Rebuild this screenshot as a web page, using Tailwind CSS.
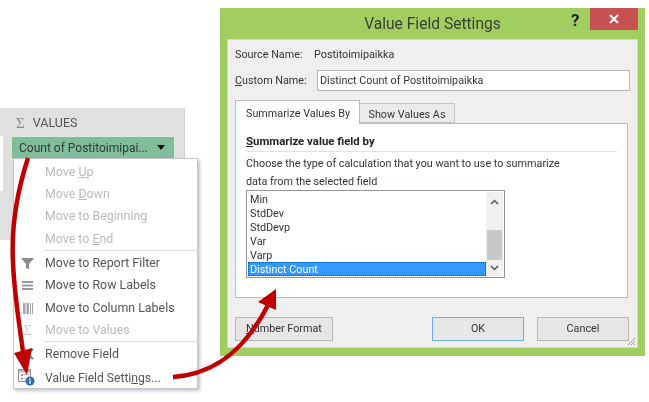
<!DOCTYPE html>
<html lang="en">
<head>
<meta charset="UTF-8">
<title>Value Field Settings</title>
<script src="https://cdn.jsdelivr.net/npm/@tailwindcss/browser@4"></script>
</head>
<body class="bg-white">
<div class="relative w-[649px] h-[402px] overflow-hidden bg-white blur-[0.3px] font-['Roboto','Noto_Sans',sans-serif] text-[12px] text-[#333]">

  <!-- pivot field pane -->
  <div class="absolute left-0 top-[108px] w-[185px] h-[132px] bg-[#e0e0e0] border-r border-[#d0d0d0]">
    <div class="flex items-center gap-[8px] pl-[16px] pt-[3px] h-[28px] text-[12.500px] text-[#555]">
      <span class="font-['Liberation_Serif',serif] text-[15px] text-[#888]">Σ</span>
      <span>VALUES</span>
    </div>
    <div class="absolute left-0 top-[28px] w-[3px] h-[55px] bg-white"></div>
    <div class="ml-[12px] w-[162px] h-[22px] flex items-center justify-between pl-[7px] pr-[9px] bg-[#82bd9b] border-t border-white/70 text-[12px] whitespace-nowrap text-[#2f3b35]">
      <span>Count of Postitoimipai...</span>
      <span class="w-0 h-0 border-x-[4px] border-x-transparent border-t-[5px] border-t-[#111]"></span>
    </div>
  </div>

  <!-- context menu -->
  <div class="absolute left-[13px] top-[158px] w-[185px] h-[231px] bg-white border border-[#c6c6c6] shadow-[2px_2px_3px_rgba(120,120,150,0.45)] text-[12.400px] text-[#555]">
    <div class="pl-[31px] pt-[2px] text-[#bbb]">
      <div class="h-[22.2px] leading-[22px]">Move <u>U</u>p</div>
      <div class="h-[22.2px] leading-[22px]">Move <u>D</u>own</div>
      <div class="h-[22.2px] leading-[22px]">Move to Be<u>g</u>inning</div>
      <div class="h-[22.2px] leading-[22px]">Move to <u>E</u>nd</div>
    </div>
    <div class="ml-[31px] border-t border-[#ddd]"></div>
    <div class="pt-[2px]">
      <div class="flex items-center h-[22px]">
        <span class="w-[31px] flex justify-center pr-[4px]">
          <svg width="13" height="13" viewBox="0 0 13 13"><path d="M0 1h13L8 7v5L5 11V7z" fill="#8b8b8b"/></svg>
        </span>Move to Report Filter
      </div>
      <div class="flex items-center h-[22px]">
        <span class="w-[31px] flex justify-center pr-[4px]">
          <svg width="11" height="9" viewBox="0 0 11 9"><path d="M0 0h11v2H0zM0 3.500h11v2H0zM0 7h11v2H0z" fill="#999"/></svg>
        </span>Move to Row Labels
      </div>
      <div class="flex items-center h-[22.6px]">
        <span class="w-[31px] flex justify-center pr-[4px]">
          <svg width="10" height="11" viewBox="0 0 10 11"><path d="M0 0h2.500v11H0zM3.500 0H6v11H3.500zM7 0h1v11H7zM9 0h1v11H9z" fill="#a5a5a5"/></svg>
        </span>Move to Column Labels
      </div>
      <div class="flex items-center h-[22px] text-[#bbb]">
        <span class="w-[31px] flex justify-center pr-[4px] font-['Liberation_Serif',serif] text-[14px] text-[#ccc]">Σ</span>Move to Values
      </div>
    </div>
    <div class="ml-[31px] border-t border-[#ddd]"></div>
    <div class="flex items-center h-[24px]">
      <span class="w-[31px] flex justify-center pr-[4px]">
        <svg width="13" height="12" viewBox="0 0 13 12"><path d="M1 1l11 10M12 1L1 11" stroke="#777" stroke-width="2"/></svg>
      </span>Remove Field
    </div>
    <div class="flex items-center h-[23px] text-[12.100px]">
      <span class="w-[31px] pl-[4px]">
        <svg width="17" height="17" viewBox="0 0 17 17">
          <path d="M.5 .5h12v12H.5z" fill="#fff" stroke="#888"/>
          <path d="M1 1h11v2.500H1z" fill="#bbb"/>
          <path d="M3 5h2v2H3zM3 8.500h2v2H3z" fill="#999"/>
          <path d="M6 5.500h5M6 9h2" stroke="#bbb"/>
          <circle cx="12" cy="12" r="4.500" fill="#2a6fb0"/>
          <path d="M11.300 9.500h1.400v1.300h-1.400zM11.300 11.500h1.400v3.200h-1.400z" fill="#fff"/>
        </svg>
      </span>Value Field Setti<u>n</u>gs...
    </div>
  </div>

  <!-- dialog window -->
  <div class="absolute left-[220px] top-[8px] w-[425px] h-[348px] flex flex-col bg-[#a2cd5f]">
    <div class="relative h-[31px] shrink-0">
      <div class="absolute left-0 right-0 top-[4px] text-center text-[15.600px] leading-[24px] text-[#3a3f35]">Value Field Settings</div>
      <span class="absolute left-[351px] top-[1px] text-[17px] font-bold leading-[22px] text-[#222]">?</span>
      <div class="absolute left-[370px] top-0 w-[48px] h-[22px] bg-[#c75050] flex items-center justify-center">
        <svg width="10" height="10" viewBox="0 0 10 10"><path d="M1 1l8 8M9 1l-8 8" stroke="#fff" stroke-width="2"/></svg>
      </div>
    </div>
    <div class="relative mx-[7px] h-[309px] bg-[#efefef] border border-[#d5d5d5] px-[7px] text-[10.800px]">
      <div class="flex items-center h-[30px] pt-[1px]">
        <span class="w-[79px]">Source Name:</span><span>Postitoimipaikka</span>
      </div>
      <div class="flex items-center h-[21px]">
        <span class="w-[82px] pt-[1px]"><u>C</u>ustom Name:</span>
        <div class="w-[313px] h-[21px] bg-white border border-[#b5b5b5] px-[2px] leading-[20px]">Distinct Count of Postitoimipaikka</div>
      </div>
      <div class="flex items-end h-[33px] relative z-10 whitespace-nowrap">
        <div class="w-[125px] h-[24px] bg-white border border-[#bbb] border-b-0 pl-[10px] leading-[25px]">Summarize Values By</div>
        <div class="w-[95px] h-[20px] mb-[1px] bg-[#eaeaea] border border-[#c4c4c4] border-l-0 text-center leading-[21px]">Show Values As</div>
      </div>
      <div class="w-[393px] h-[175px] -mt-[1px] bg-white border border-[#bbb] px-[10px] pt-[9px]">
        <div class="font-bold text-[11.400px] text-[#222] leading-[16px]"><u>S</u>ummarize value field by</div>
        <div class="border-t border-[#e2e2e2] mt-[2px] mb-[3px]"></div>
        <div class="leading-[18px]">Choose the type of calculation that you want to use to summarize<br>data from the selected field</div>
        <div class="flex w-[259px] h-[88px] -mt-[1px] border border-[#8f959b] p-[1px] leading-[16px]">
          <div class="flex-1 flex flex-col">
            <div class="h-[14px] pl-[2px]">Min</div>
            <div class="h-[14px] pl-[2px]">StdDev</div>
            <div class="h-[14px] pl-[2px]">StdDevp</div>
            <div class="h-[14px] pl-[2px]">Var</div>
            <div class="h-[14px] pl-[2px]">Varp</div>
            <div class="h-[14px] pl-[2px] bg-[#3399ff] text-white outline outline-dotted outline-[#1a4f8a] -outline-offset-1">Distinct Count</div>
          </div>
          <div class="w-[17px] flex flex-col bg-[#f0f0f0]">
            <div class="h-[37px] flex justify-center pt-[7px]">
              <svg width="9" height="6" viewBox="0 0 9 6"><path d="M1 5l3.500-3.500L8 5" fill="none" stroke="#555" stroke-width="1.500"/></svg>
            </div>
            <div class="h-[30px] mt-[1px] mx-[1px] bg-[#c8c8c8]"></div>
            <div class="flex-1 flex justify-center pt-[5px]">
              <svg width="9" height="6" viewBox="0 0 9 6"><path d="M1 1l3.500 3.500L8 1" fill="none" stroke="#555" stroke-width="1.500"/></svg>
            </div>
          </div>
        </div>
      </div>
      <div class="flex mt-[19px] leading-[22px] text-center">
        <div class="w-[98px] h-[24px] bg-[#e6e6e6] border border-[#b8b8b8]"><u>N</u>umber Format</div>
        <div class="w-[92px] h-[24px] ml-[99px] bg-[#e6e6e6] border border-[#68aef0]">OK</div>
        <div class="w-[92px] h-[24px] ml-[13px] bg-[#e6e6e6] border border-[#b8b8b8]">Cancel</div>
      </div>
      <svg class="absolute right-[1px] bottom-[1px]" width="10" height="10" viewBox="0 0 10 10"><path d="M9 2L2 9M9 5L5 9M9 8L8 9" stroke="#9a9a9a" stroke-width="1"/></svg>
    </div>
  </div>

  <!-- red callout arrows -->
  <svg class="absolute left-0 top-0" width="649" height="402" viewBox="0 0 649 402">
    <path d="M28 158C17 192 11 225 13 262C14 292 19 322 23 352" fill="none" stroke="#c00000" stroke-width="4.500"/>
    <path d="M14 353L32 348L27 375Z" fill="#c00000"/>
    <path d="M173 377C205 375 240 360 268 305" fill="none" stroke="#c00000" stroke-width="4.500"/>
    <path d="M258 302L276 289L276 310Z" fill="#c00000"/>
  </svg>
</div>
</body>
</html>
